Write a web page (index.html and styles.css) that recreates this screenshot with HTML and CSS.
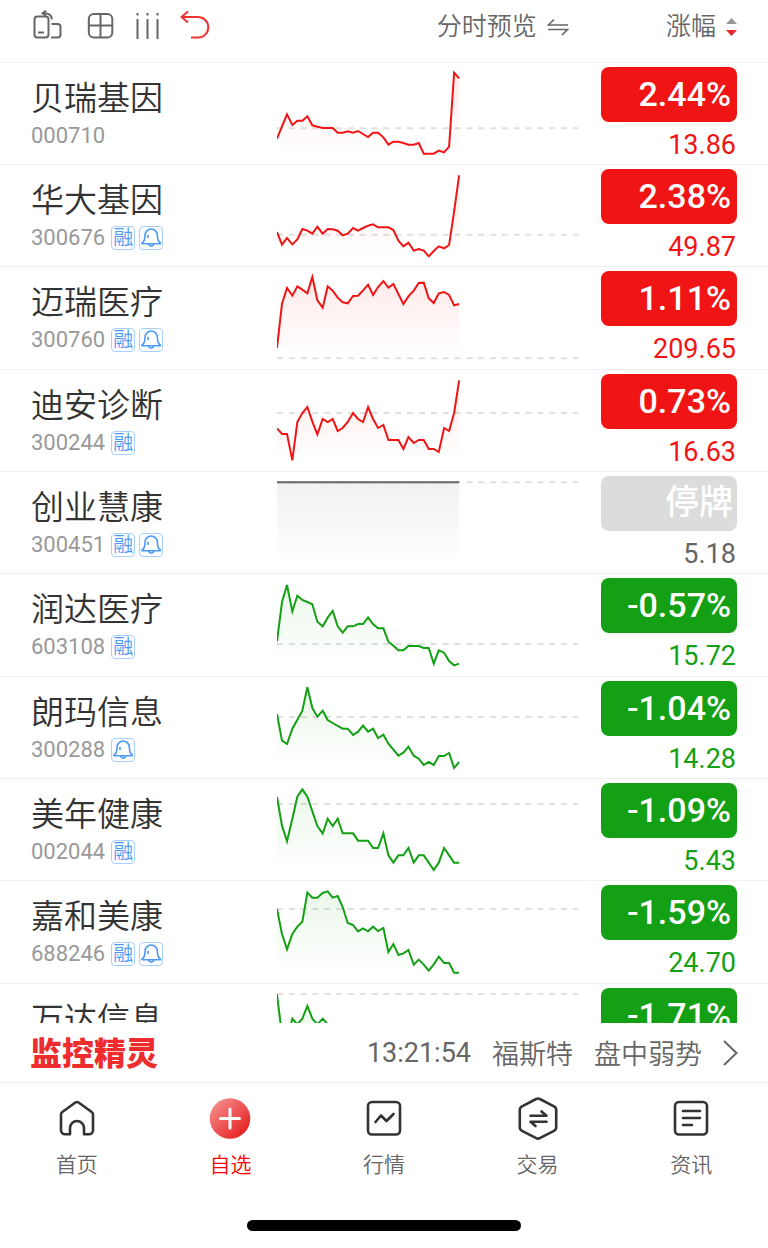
FILE: index.html
```html
<!DOCTYPE html>
<html lang="zh-CN">
<head>
    <meta charset="UTF-8">
    <meta name="viewport" content="width=device-width, initial-scale=1.0">
    <title>自选</title>
    <link rel="stylesheet" href="styles.css">
</head>
<body>
    <main class="watchlist">
        <table class="stocks">
            <colgroup>
                <col class="col-name">
                <col class="col-chart">
                <col class="col-change">
            </colgroup>
            <thead>
                <tr>
                    <th>
                        <div class="toolbar">
                            <button type="button" aria-label="切换横屏">
                                <svg class="icon" width="34" height="32" viewBox="0 0 34 32">
                                    <rect x="2.5" y="6.500" width="14" height="21" rx="3"/>
                                    <path d="M6 22.500h6M19.500 14H25.500a3 3 0 0 1 3 3v7.500a3 3 0 0 1-3 3H19M14 .8L10.500 3.300l3.500 2.500M10.500 3.300c5-.5 9 1 9.500 6"/>
                                </svg>
                            </button>
                            <button type="button" aria-label="宫格">
                                <svg class="icon" width="30" height="32" viewBox="0 0 30 32">
                                    <rect x="2.800" y="4" width="23.500" height="23.500" rx="5"/>
                                    <path d="M14.500 4v23.500M3 15.500h23.500"/>
                                </svg>
                            </button>
                            <button type="button" aria-label="列设置">
                                <svg class="icon" width="24" height="32" viewBox="0 0 24 32">
                                    <path d="M1.500 3v2.500M11.500 3v2.500M21.500 3v2.500M1.500 9v20M11.500 9v20M21.500 9v20"/>
                                </svg>
                            </button>
                            <button type="button" aria-label="撤销">
                                <svg class="icon icon-undo" width="30" height="32" viewBox="0 0 30 32">
                                    <path d="M8 1.500L1.500 7l6.500 5.500M1.500 7H18a10.300 10.300 0 0 1 0 20.600H11"/>
                                </svg>
                            </button>
                        </div>
                    </th>
                    <th>
                        <button type="button" class="head-button preview">
                            分时预览
                            <svg class="icon icon-swap" width="22" height="18" viewBox="0 0 22 18">
                                <path d="M7 1.500L1.500 7H21M1 11.500h19.500L15 17"/>
                            </svg>
                        </button>
                    </th>
                    <th>
                        <button type="button" class="head-button">
                            涨幅
                            <svg width="11" height="20" viewBox="0 0 11 20">
                                <path d="M5.500 1L11 7H0z" fill="#999"/>
                                <path d="M0 13h11l-5.500 6z" fill="#e8292b"/>
                            </svg>
                        </button>
                    </th>
                </tr>
            </thead>
            <tbody id="stock-rows"></tbody>
        </table>
    </main>

    <a class="ticker" href="#">
        <strong class="ticker-brand">监控精灵</strong>
        <time>13:21:54</time>
        <span>福斯特</span>
        <span>盘中弱势</span>
        <svg class="icon" width="15" height="26" viewBox="0 0 15 26">
            <path d="M1 1l12.500 12L1 25"/>
        </svg>
    </a>

    <nav class="tabbar">
        <a href="#">
            <svg class="tab-icon" width="44" height="44" viewBox="0 0 44 44">
                <path d="M15 37.300H10a4 4 0 0 1-4-4V17.500a3 3 0 0 1 1.300-2.500L20.400 5.500a3 3 0 0 1 3.200 0L36.700 15a3 3 0 0 1 1.300 2.500v15.800a4 4 0 0 1-4 4h-5V31a7 7 0 0 0-14 0z"/>
            </svg>
            首页
        </a>
        <a href="#" class="active">
            <svg width="44" height="44" viewBox="0 0 44 44">
                <defs>
                    <linearGradient id="plus-fill" x1="0" y1="0" x2="1" y2="1">
                        <stop offset="0.100" stop-color="#f58c8c"/>
                        <stop offset="0.900" stop-color="#e61e1e"/>
                    </linearGradient>
                </defs>
                <circle cx="22" cy="21.500" r="20.300" fill="url(#plus-fill)"/>
                <path d="M22 12v19M12.500 21.500h19" stroke="#fff" stroke-width="3" stroke-linecap="round"/>
            </svg>
            自选
        </a>
        <a href="#">
            <svg class="tab-icon" width="44" height="44" viewBox="0 0 44 44">
                <rect x="6" y="5" width="32" height="32.500" rx="4"/>
                <path d="M13.500 25L19 18.500l5.500 5.500L31.500 17"/>
            </svg>
            行情
        </a>
        <a href="#">
            <svg class="tab-icon" width="44" height="44" viewBox="0 0 44 44">
                <path d="M20.200 2a4 4 0 0 1 3.600 0L38 9.300a4 4 0 0 1 2.200 3.600v17.400a4 4 0 0 1-2.200 3.600L23.800 41.200a4 4 0 0 1-3.600 0L6 33.900a4 4 0 0 1-2.200-3.600V12.900A4 4 0 0 1 6 9.300z"/>
                <path d="M14.500 18.800h16l-5-4.300M30.500 24.800H14.500l5 4.300"/>
            </svg>
            交易
        </a>
        <a href="#">
            <svg class="tab-icon" width="44" height="44" viewBox="0 0 44 44">
                <rect x="6" y="5" width="32" height="32.500" rx="4"/>
                <path d="M14 14h17M14 21h17M14 28h9"/>
            </svg>
            资讯
        </a>
    </nav>
    <div class="home-indicator"></div>

    <script src="script.js"></script>
</body>
</html>
```
FILE: styles.css
```css
* {
    box-sizing: border-box;
}

body {
    display: flex;
    flex-direction: column;
    height: 100vh;
    margin: 0;
    background-color: #fff;
    color: #666;
    font-family: Roboto, "Noto Sans CJK SC", sans-serif;
    font-weight: 350;
}

button {
    padding: 0;
    border: none;
    background: none;
    color: inherit;
    font: inherit;
    cursor: pointer;
}

a {
    color: inherit;
    text-decoration: none;
}

svg {
    display: block;
    flex: none;
}

.icon {
    fill: none;
    stroke: #666;
    stroke-width: 2;
}

.icon-undo {
    stroke: #f03434;
}

.icon-swap {
    stroke-width: 1.6;
}

/* Stock table */
.watchlist {
    flex: 1;
    min-height: 0;
    overflow-y: auto;
    scrollbar-width: none;
}

.stocks {
    width: 100%;
    table-layout: fixed;
    border-collapse: separate;
    border-spacing: 0;
}

.col-name { width: 36%; }
.col-chart { width: 40%; }
.col-change { width: 24%; }

.stocks th,
.stocks td {
    padding: 0;
    border-bottom: 1px solid #f0f0f0;
    vertical-align: top;
    font-weight: inherit;
}

.stocks th {
    height: 63px;
    padding-top: 9px;
    text-align: right;
}

.stocks tbody tr {
    height: 102px;
}

.stocks tbody tr:nth-child(3n) {
    height: 103px;
}

.stocks th:first-child,
.stocks td:first-child {
    padding-left: 31px;
}

.stocks td:nth-child(2) {
    padding: 0 4px 0 1px;
}

.stocks th:last-child,
.stocks td:last-child {
    padding-right: 31px;
}

.toolbar {
    display: flex;
    gap: 20px;
    padding: 1px 0 0 1px;
}

.head-button {
    display: inline-flex;
    align-items: center;
    gap: 10px;
    font-size: 25px;
    line-height: 36px;
}

.preview {
    margin-right: 15px;
}

.stocks td:first-child {
    padding-top: 14px;
}

.name {
    color: #333;
    font-size: 33px;
    line-height: 44px;
}

.meta {
    display: flex;
    align-items: center;
    gap: 4px;
    height: 24px;
    margin-top: 3px;
}

.code {
    margin: 0 2px 2px 0;
    color: #999;
    font-size: 22px;
    font-weight: 400;
}

.tag {
    width: 24px;
    height: 24px;
    border: 1px solid #a9cffc;
    border-radius: 4px;
    color: #4c9af5;
    font-size: 20px;
    line-height: 22px;
    text-align: center;
}

.tag svg {
    fill: none;
    stroke: #4c9af5;
    stroke-width: 1.6;
    stroke-linejoin: round;
}

/* Intraday chart */
.chart {
    width: 100%;
    height: 101px;
    fill: none;
    stroke-width: 6;
}

.chart .base {
    stroke: #e0e0e0;
    stroke-dasharray: 18 17 18 18;
}

.up { color: #f01414; }
.down { color: #14a014; }
.halt { color: #666; }

.chart .line {
    stroke: currentColor;
}

.change {
    height: 55px;
    margin: 4px 0 8px 17px;
    padding-right: 6px;
    border-radius: 8px;
    background-color: currentColor;
    font-size: 34px;
    font-weight: 500;
    line-height: 55px;
    text-align: right;
}

.change span {
    color: #fff;
}

.halt .change {
    padding-right: 4px;
    background-color: #dcdcdc;
    line-height: 52px;
}

.price {
    padding-right: 1px;
    font-size: 27px;
    font-weight: 400;
    line-height: 30px;
    text-align: right;
}

/* Monitor ticker */
.ticker {
    display: flex;
    align-items: center;
    gap: 21px;
    height: 59px;
    padding: 0 30px;
    font-size: 27px;
}

.ticker time {
    font-weight: 400;
}

.ticker-brand {
    margin-right: auto;
    padding-bottom: 4px;
    color: #ee2c2e;
    font-size: 32px;
    font-weight: 900;
}

/* Bottom tabs */
.tabbar {
    display: flex;
    padding-top: 14px;
    border-top: 1px solid #f0f0f0;
}

.tabbar a {
    display: flex;
    flex: 1;
    flex-direction: column;
    align-items: center;
    gap: 9px;
    font-size: 21px;
    line-height: 30px;
}

.tabbar .active {
    color: #f00;
}

.tab-icon {
    fill: none;
    stroke: #333;
    stroke-width: 2.6;
    stroke-linejoin: round;
    stroke-linecap: round;
}

.home-indicator {
    width: 274px;
    max-width: 50%;
    height: 11px;
    margin: 40px auto 17px;
    border-radius: 6px;
    background-color: #000;
}
```
FILE: script.js
```js
// Chart values run downwards on a 906 x 303 canvas, one point every few minutes
const STEP = 546 / 36;

const stocks = [
    {
        name: '贝瑞基因', code: '000710', tags: [], change: '2.44%', price: '13.86', state: 'up', base: 196,
        points: [227,190,154,186,173,173,160,187,191,195,195,195,209,209,205,209,204,213,222,209,209,223,245,236,236,240,245,245,240,272,272,272,263,268,251,29,46]
    },
    {
        name: '华大基因', code: '300676', tags: ['margin', 'bell'], change: '2.38%', price: '49.87', state: 'up', base: 209,
        points: [201,239,219,238,223,192,197,206,185,206,192,193,197,211,206,189,197,189,182,178,187,187,187,195,227,244,233,257,252,257,274,258,244,250,240,140,31]
    },
    {
        name: '迈瑞医疗', code: '300760', tags: ['margin', 'bell'], change: '1.11%', price: '209.65', state: 'up', base: 274,
        points: [243,110,63,86,58,68,79,30,100,122,58,71,92,106,109,87,86,70,53,84,60,42,62,51,81,111,88,71,48,47,94,108,79,75,84,115,111]
    },
    {
        name: '迪安诊断', code: '300244', tags: ['margin'], change: '0.73%', price: '16.63', state: 'up', base: 129,
        points: [175,192,192,271,156,129,111,155,193,147,156,147,183,174,156,129,147,156,111,147,174,165,210,210,210,237,201,219,210,210,237,237,246,174,183,129,31]
    },
    {
        name: '创业慧康', code: '300451', tags: ['margin', 'bell'], change: '停牌', price: '5.18', state: 'halt', base: 31,
        points: new Array(37).fill(31)
    },
    {
        name: '润达医疗', code: '603108', tags: ['margin'], change: '-0.57%', price: '15.72', state: 'down', base: 210,
        points: [202,84,33,112,65,78,84,91,143,157,131,111,157,176,157,157,150,150,130,150,163,163,203,215,229,229,216,216,216,222,222,269,229,236,261,274,269]
    },
    {
        name: '朗玛信息', code: '300288', tags: ['bell'], change: '-1.04%', price: '14.28', state: 'down', base: 120,
        points: [111,191,201,155,128,101,31,93,119,101,129,138,147,155,155,174,164,146,164,155,183,173,200,218,236,227,209,236,245,264,255,264,237,237,228,273,255]
    },
    {
        name: '美年健康', code: '002044', tags: ['margin'], change: '-1.09%', price: '5.43', state: 'down', base: 75,
        points: [54,140,187,119,53,31,53,97,141,164,119,141,119,163,163,163,185,185,185,207,207,163,229,251,229,229,207,251,229,229,251,273,251,207,229,251,251]
    },
    {
        name: '嘉和美康', code: '688246', tags: ['margin', 'bell'], change: '-1.59%', price: '24.70', state: 'down', base: 84,
        points: [84,159,205,159,137,122,35,50,50,36,31,50,45,78,126,132,151,142,151,137,150,141,213,189,222,217,207,251,236,251,269,250,227,246,246,275,275]
    },
    {
        name: '万达信息', code: '', tags: [], change: '-1.71%', price: '', state: 'down', base: 30,
        points: [31,153,170,104,121,104,66,104,121,104,121,135,121,140,150,150,160,170,165,175,180,190,185,200,210,205,215,220,230,225,235,240,250,245,255,260,258]
    }
];

const tagHtml = {
    margin: '<span class="tag">融</span>',
    bell: `
        <span class="tag">
            <svg width="22" height="22" viewBox="0 0 22 22">
                <path d="M2 16c2.500-1.500 3-3 3-7.500a6.200 6.500 0 0 1 12.400 0c0 4.500 .5 6 3 7.500v.8H2zM8.500 17c.8 2.800 4.600 2.800 5.400 0M8 7.800v3.200"/>
            </svg>
        </span>`
};

function chartHtml(stock, index) {
    const line = stock.points.map((y, i) => `${Math.round(i * STEP)},${y}`).join(' ');
    return `
        <svg class="chart" viewBox="0 0 906 303" preserveAspectRatio="none">
            <defs>
                <linearGradient id="area-${index}" gradientUnits="userSpaceOnUse" x1="0" y1="31" x2="0" y2="273">
                    <stop offset="0" stop-color="currentColor" stop-opacity="0.090"/>
                    <stop offset="1" stop-color="currentColor" stop-opacity="0"/>
                </linearGradient>
            </defs>
            <path class="base" d="M0 ${stock.base}H903"/>
            <polygon fill="url(#area-${index})" points="0,273 ${line} 546,273"/>
            <polyline class="line" points="${line}"/>
        </svg>`;
}

document.getElementById('stock-rows').innerHTML = stocks.map((stock, index) => `
    <tr>
        <td>
            <div class="name">${stock.name}</div>
            <div class="meta">
                <span class="code">${stock.code}</span>
                ${stock.tags.map(tag => tagHtml[tag]).join('')}
            </div>
        </td>
        <td class="${stock.state}">${chartHtml(stock, index)}</td>
        <td class="${stock.state}">
            <div class="change"><span>${stock.change}</span></div>
            <div class="price">${stock.price}</div>
        </td>
    </tr>`).join('');
```
